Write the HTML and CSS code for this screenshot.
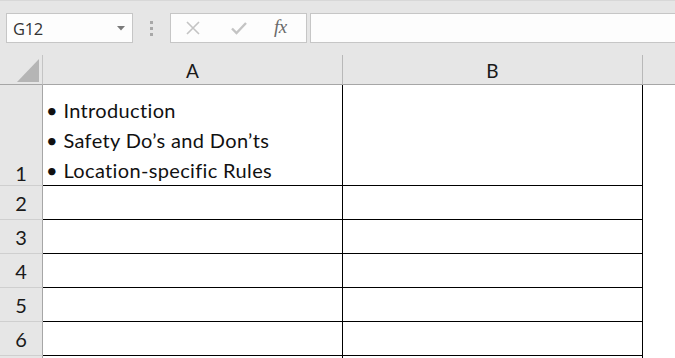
FILE: index.html
```html
<!DOCTYPE html>
<html>
<head>
<meta charset="utf-8">
<link rel="stylesheet" href="styles.css">
</head>
<body>
<div class="app">
  <div class="toolbar">
    <div class="namebox">
      <span class="name">G12</span>
      <svg class="caret" width="8" height="5" viewBox="0 0 8 5"><path d="M0 0H8L4 4.5Z" fill="#7a7a7a"/></svg>
    </div>
    <div class="grip"><span></span><span></span><span></span></div>
    <div class="fxbox">
      <svg class="ico" width="16" height="16" viewBox="0 0 16 16"><path d="M2 2L14 14M14 2L2 14" stroke="#c4c4c4" stroke-width="1.6" fill="none"/></svg>
      <svg class="ico" width="18" height="16" viewBox="0 0 18 16"><path d="M2 8.5L6.5 13L16 3" stroke="#c4c4c4" stroke-width="2.4" fill="none"/></svg>
      <span class="fx">fx</span>
    </div>
    <div class="formula"></div>
  </div>
  <div class="sheet">
    <div class="corner"><span class="tri"></span></div>
    <div class="colhead">A</div>
    <div class="colhead">B</div>
    <div class="colhead rest"></div>

    <div class="rowhead big">1</div>
    <div class="cell big">
      <div class="lines">
        <div>• Introduction</div>
        <div>• Safety Do’s and Don’ts</div>
        <div>• Location-specific Rules</div>
      </div>
    </div>
    <div class="cell"></div>
    <div class="blank"></div>

    <div class="rowhead">2</div><div class="cell"></div><div class="cell"></div><div class="blank"></div>
    <div class="rowhead">3</div><div class="cell"></div><div class="cell"></div><div class="blank"></div>
    <div class="rowhead">4</div><div class="cell"></div><div class="cell"></div><div class="blank"></div>
    <div class="rowhead">5</div><div class="cell"></div><div class="cell"></div><div class="blank"></div>
    <div class="rowhead">6</div><div class="cell"></div><div class="cell"></div><div class="blank"></div>
    <div class="rowhead last"></div><div class="cell last"></div><div class="cell last"></div><div class="blank"></div>
  </div>
</div>
</body>
</html>
```

FILE: styles.css
```css
html, body {
  margin: 0;
  padding: 0;
  height: 358px;
  overflow: hidden;
  background: #ffffff;
}
* { box-sizing: border-box; }

.app {
  width: 675px;
  height: 358px;
  overflow: hidden;
  display: flex;
  flex-direction: column;
}

.toolbar {
  height: 55px;
  flex: none;
  background: #e6e6e6;
  border-top: 1px solid #d8d8d8;
  padding: 12px 0 0 6px;
  display: flex;
  align-items: flex-start;
}

.namebox {
  width: 127px;
  height: 30px;
  background: #fdfdfd;
  border: 1px solid #c6c6c6;
  display: flex;
  align-items: center;
  justify-content: space-between;
  padding: 0 7px 0 6px;
}
.name {
  font-family: "Open Sans", "Noto Sans", sans-serif;
  font-size: 16.5px;
  color: #333333;
  letter-spacing: -0.3px;
}
.caret { margin-top: 1px; }

.grip {
  width: 37px;
  height: 30px;
  display: flex;
  flex-direction: column;
  align-items: center;
  justify-content: center;
  gap: 3px;
}
.grip span {
  width: 3px;
  height: 3px;
  background: #a8a8a8;
}

.fxbox {
  width: 137px;
  height: 30px;
  background: #fdfdfd;
  border: 1px solid #c6c6c6;
  display: flex;
  align-items: center;
  padding-left: 14px;
}
.fxbox .ico:nth-child(1) { margin-right: 29px; }
.fxbox .ico:nth-child(2) { margin-right: 26px; }
.fx {
  font-family: "Liberation Serif", "DejaVu Serif", serif;
  font-style: italic;
  font-size: 19px;
  color: #6a6a6a;
  letter-spacing: -0.5px;
  margin-top: -2px;
}

.formula {
  flex: 1;
  height: 30px;
  margin-left: 3px;
  background: #fdfdfd;
  border: 1px solid #c6c6c6;
  border-right: none;
}

.sheet {
  flex: 1;
  display: grid;
  grid-template-columns: 43px 300px 300px 1fr;
  grid-template-rows: 30px 101px repeat(5, 34px) 1fr;
  font-family: Lato, "Open Sans", sans-serif;
  color: #1a1a1a;
}

.corner {
  background: #e6e6e6;
  border-right: 1px solid #c4c4c4;
  border-bottom: 1px solid #a6a6a6;
  position: relative;
}
.tri {
  position: absolute;
  left: 17px;
  top: 4px;
  width: 22px;
  height: 23px;
  background: #b5b5b5;
  clip-path: polygon(100% 0, 100% 100%, 0 100%);
}

.colhead {
  background: #e6e6e6;
  border-right: 1px solid #b8b8b8;
  border-bottom: 1px solid #a6a6a6;
  display: flex;
  align-items: center;
  justify-content: center;
  font-size: 19px;
  padding-top: 2px;
}
.colhead.rest { border-right: none; }

.rowhead {
  background: #e6e6e6;
  border-right: 1px solid #a6a6a6;
  border-bottom: 1px solid #cfcfcf;
  display: flex;
  align-items: center;
  justify-content: center;
  font-size: 20px;
  padding-top: 1px;
}
.rowhead.big {
  align-items: flex-end;
  padding-bottom: 0;
}

.cell {
  background: #ffffff;
  border-right: 1px solid #000000;
  border-bottom: 1px solid #000000;
}
.cell.big {
  display: flex;
  align-items: flex-end;
  padding: 0 0 0 3px;
}
.rowhead.last,
.cell.last { border-bottom: none; }
.lines {
  font-size: 20px;
  line-height: 30px;
  letter-spacing: 0.35px;
  color: #111111;
}
.blank { background: #ffffff; }
```
